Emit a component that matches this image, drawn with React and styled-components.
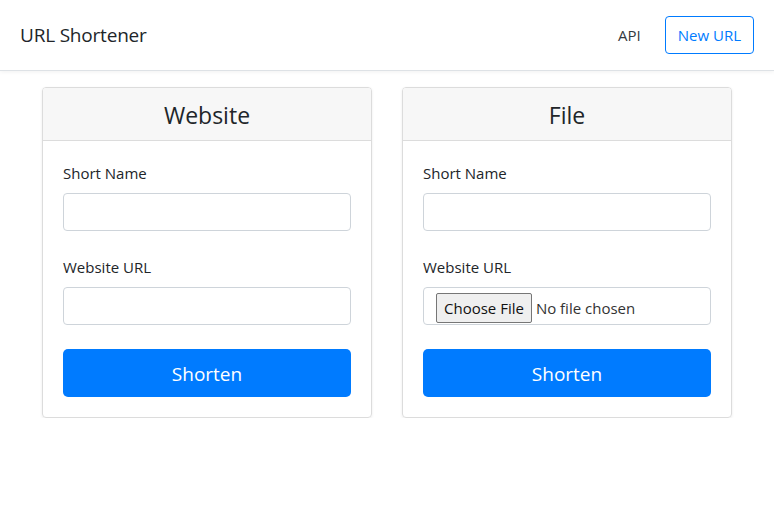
import React from "react";
import styled, { createGlobalStyle } from "styled-components";

const Global = createGlobalStyle`
  html, body { margin: 0; padding: 0; background: #fff; }
  body {
    font-family: "Open Sans", "Noto Sans", sans-serif;
    font-size: 16px;
    line-height: 1.5;
    color: #212529;
  }
  * { box-sizing: border-box; }
`;

const Navbar = styled.nav`
  height: 71px;
  display: flex;
  align-items: center;
  justify-content: space-between;
  padding: 0 20px;
  border-bottom: 1px solid #dee2e6;
  box-shadow: 0 1px 4px rgba(0, 0, 0, 0.06);
`;

const Brand = styled.a`
  font-size: 19px;
  color: #212529;
  text-decoration: none;
  letter-spacing: -0.2px;
`;

const NavRight = styled.div`
  display: flex;
  align-items: center;
  gap: 24px;
`;

const NavLink = styled.a`
  font-size: 15px;
  color: #343a40;
  text-decoration: none;
`;

const OutlineButton = styled.button`
  height: 38px;
  padding: 0 12px;
  font-family: inherit;
  font-size: 15px;
  color: #007bff;
  background: #fff;
  border: 1px solid #007bff;
  border-radius: 4px;
`;

const Main = styled.main`
  display: flex;
  justify-content: center;
  gap: 30px;
  padding-top: 16px;
`;

const Card = styled.section`
  width: 330px;
  border: 1px solid #dcdcdc;
  border-radius: 4px;
  box-shadow: 0 1px 3px rgba(0, 0, 0, 0.08);
  overflow: hidden;
`;

const CardHeader = styled.h2`
  margin: 0;
  height: 53px;
  padding-top: 2px;
  display: flex;
  align-items: center;
  justify-content: center;
  background: #f7f7f7;
  border-bottom: 1px solid #dcdcdc;
  font-size: 23px;
  font-weight: 400;
`;

const CardBody = styled.form`
  padding: 20px;
  display: flex;
  flex-direction: column;
`;

const Group = styled.div`
  display: flex;
  flex-direction: column;
  margin-bottom: 24px;
`;

const Label = styled.label`
  font-size: 15px;
  line-height: 24px;
  margin-bottom: 8px;
`;

const Input = styled.input`
  height: 38px;
  width: 100%;
  border: 1px solid #ced4da;
  border-radius: 4px;
  padding: 6px 12px;
  font-family: inherit;
  font-size: 16px;
`;

const FileBox = styled.div`
  height: 38px;
  border: 1px solid #ced4da;
  border-radius: 4px;
  padding: 5px 12px 0;
  display: flex;
  align-items: flex-start;
  gap: 4px;
  font-size: 15px;
  color: #333;
`;

const FileButton = styled.span`
  height: 30px;
  padding: 0 7px;
  display: flex;
  align-items: center;
  background: #efefef;
  border: 1px solid #767676;
  border-radius: 2px;
  color: #111;
`;

const FileText = styled.span`
  line-height: 30px;
`;

const PrimaryButton = styled.button`
  height: 48px;
  width: 100%;
  border: none;
  border-radius: 5px;
  background: #007bff;
  color: #fff;
  font-family: inherit;
  font-size: 19px;
  padding-top: 2px;
`;

function WebsiteCard() {
  return (
    <Card>
      <CardHeader>Website</CardHeader>
      <CardBody onSubmit={(e) => e.preventDefault()}>
        <Group>
          <Label>Short Name</Label>
          <Input type="text" />
        </Group>
        <Group>
          <Label>Website URL</Label>
          <Input type="text" />
        </Group>
        <PrimaryButton type="submit">Shorten</PrimaryButton>
      </CardBody>
    </Card>
  );
}

function FileCard() {
  return (
    <Card>
      <CardHeader>File</CardHeader>
      <CardBody onSubmit={(e) => e.preventDefault()}>
        <Group>
          <Label>Short Name</Label>
          <Input type="text" />
        </Group>
        <Group>
          <Label>Website URL</Label>
          <FileBox>
            <FileButton>Choose File</FileButton>
            <FileText>No file chosen</FileText>
          </FileBox>
        </Group>
        <PrimaryButton type="submit">Shorten</PrimaryButton>
      </CardBody>
    </Card>
  );
}

export default function App() {
  return (
    <>
      <Global />
      <Navbar>
        <Brand href="#">URL Shortener</Brand>
        <NavRight>
          <NavLink href="#">API</NavLink>
          <OutlineButton>New URL</OutlineButton>
        </NavRight>
      </Navbar>
      <Main>
        <WebsiteCard />
        <FileCard />
      </Main>
    </>
  );
}
